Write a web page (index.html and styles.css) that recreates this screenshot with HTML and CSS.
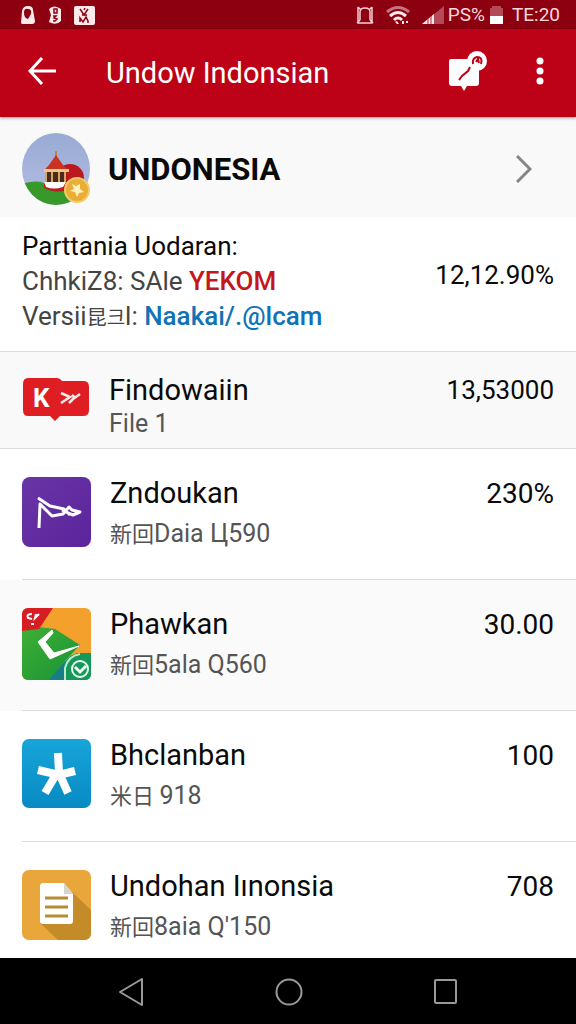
FILE: index.html
```html
<!DOCTYPE html>
<html lang="id">
<head>
  <meta charset="UTF-8">
  <meta name="viewport" content="width=device-width, initial-scale=1.0">
  <title>Undow Indonsian</title>
  <link rel="stylesheet" href="styles.css">
</head>
<body>
<div class="status-bar">
  <div class="status-left">
    <svg width="16" height="20" viewBox="0 0 16 20"><path d="M1 18 2 6Q3 1 8 1t5 4l2 11q0 3-3 3H2z" fill="#ffe9ea"/><path d="M8 4q4 0 3 5l-3 5Q4 13 4 8t4-4zM8 16l5 1" fill="#8c000f"/></svg>
    <svg width="14" height="20" viewBox="0 0 14 20"><path d="M1 4q5-5 12 0v12q-5 5-12 1l2-7z" fill="#ffe9ea"/><path d="M6 4h3v4H6zM5 11h3l-2 2 3 1-2 2H5" fill="none" stroke="#8c000f" stroke-width="1.5"/></svg>
    <svg width="21" height="20" viewBox="0 0 21 20"><rect width="21" height="19" y="1" rx="2" fill="#ffe9ea"/><path d="m6 4 4 6 4-6M10 5l1-2M8 10h5M6 17v-4l3 4 3-5 2 4v2" fill="none" stroke="#8c000f" stroke-width="1.5"/></svg>
  </div>
  <div class="status-right">
    <svg width="18" height="20" viewBox="0 0 18 20"><path d="M2 2v16h14V2M4 15V7q0-4 5-4t5 4v8M1 18l3-3M17 18l-3-3M2 2l3 3M16 2l-3 3M7 18h4" fill="none" stroke="#f7cfd3" stroke-width="1.5"/></svg>
    <svg class="wifi" width="24" height="20" viewBox="0 0 24 20"><g fill="none" stroke-width="3"><path d="M1 7q11-9 22 0" stroke="#c57580"/><path d="M4 11q8-7 16 0" stroke="#ffe9ea"/><path d="M8 15q4-4 8 0" stroke="#ffe9ea"/></g><path d="m9 17 2-1 2 3h-2zM16 16h2v3h-2zM20 16h2v2h-2z" fill="#ffe9ea"/></svg>
    <svg class="signal" width="22" height="20" viewBox="0 0 22 20"><path d="M0 19 22 1v18z" fill="#b44a58"/><path d="M0 19 12 9v10z" fill="#ffe9ea"/><path d="M6 13v6M9 11v8" stroke="#a52b3a"/></svg>
    <span>PS%</span>
    <svg class="battery" width="15" height="20" viewBox="0 0 15 20"><path d="M3 1h9v2h2v8H1V3h2z" fill="#b44a58"/><path d="M1 11h13v8H1z" fill="#fff"/></svg>
    <span>TE:20</span>
  </div>
</div>

<header class="app-bar">
  <button type="button" class="icon-btn" aria-label="Back">
    <svg width="28" height="28" viewBox="0 0 28 28"><path d="M14 1 2 14l12 13M2 14h26" fill="none" stroke="#fff" stroke-width="3"/></svg>
  </button>
  <h1>Undow Indonsian</h1>
  <button type="button" class="icon-btn" aria-label="New message">
    <svg width="40" height="40" viewBox="0 0 40 40"><path d="M3 8h21l7 8v16q0 3-3 3h-9l-3 5-3-5H4q-3 0-3-3V10q0-2 2-2z" fill="#fff"/><circle cx="29" cy="10" r="10" fill="#fff"/><path d="m11 29 3-4 6-5 2-4" fill="none" stroke="#bd0217" stroke-width="2"/><path d="M25 13q-1-6 4-7 6 0 4 7M28 11l2-3 1 4" fill="none" stroke="#bd0217" stroke-width="2"/></svg>
  </button>
  <button type="button" class="icon-btn more" aria-label="More options">
    <svg width="8" height="28" viewBox="0 0 8 28"><g fill="#fff"><circle cx="4" cy="4" r="3.5"/><circle cx="4" cy="14" r="3.5"/><circle cx="4" cy="24" r="3.5"/></g></svg>
  </button>
</header>

<main>
  <a href="#" class="profile">
    <svg width="68" height="72" viewBox="0 0 68 72">
      <defs>
        <clipPath id="avatar"><ellipse cx="34" cy="36" rx="34" ry="36"/></clipPath>
        <linearGradient id="sky" x1="0" y1="0" x2="0" y2="1"><stop offset="0" stop-color="#97abd3"/><stop offset="1" stop-color="#b6bce4"/></linearGradient>
      </defs>
      <g clip-path="url(#avatar)">
        <path fill="url(#sky)" d="M0 0h68v72H0z"/>
        <path d="M0 51q15-6 31 2t37 6v13H0z" fill="#36992a"/>
        <circle cx="48" cy="45" r="14" fill="#bd1822"/>
        <path d="M22 50h28v5q-15 7-28 0z" fill="#b91f20"/>
      </g>
      <path d="M34 18v7" stroke="#c98533" stroke-width="2"/>
      <path d="m34 22 7 10 5 5H22l5-5z" fill="#ca3224"/>
      <path d="M22 36h25v3H22z" fill="#e9c785"/>
      <path d="M24 39h20v10H24z" fill="#4b291b"/>
      <path d="M24 39v10M30 39v10M37 39v10M43 39v10" stroke="#d3a666" stroke-width="2"/>
      <path d="M22 49h22l-3 5q-9 3-17 0z" fill="#fff"/>
      <circle cx="55" cy="57" r="12" fill="#eaae38" stroke="#f3cb68" stroke-width="2"/>
      <path d="m50 51 4 2 4-2v5l4 3-5 1-2 4-2-5-5-1 4-2z" fill="#fff0bc"/>
    </svg>
    <h2>UNDONESIA</h2>
    <svg class="chevron" width="16" height="28" viewBox="0 0 16 28"><path d="m1 1 13 13L1 27" fill="none" stroke="#858585" stroke-width="3"/></svg>
  </a>

  <section class="details">
    <div class="details-text">
      <p class="lead">Parttania Uodaran:</p>
      <p>ChhkiZ8: SAle <strong>YEKOM</strong></p>
      <p>Versii<span class="cjk">昆크</span>l: <a href="#">Naakai/.@lcam</a></p>
    </div>
    <span class="value">12,12.90%</span>
  </section>

  <ul class="list">
    <li class="row compact">
      <svg width="68" height="44" viewBox="0 0 68 44"><path d="M6 0h29q3 0 5 3h22q5 0 5 6v23q0 6-6 6H38l-5 5-5-5H6q-5 0-5-6V6q0-6 5-6z" fill="#df1e23"/><text x="11" y="29" class="badge-text">K</text><path d="m39 15 9 4-9 6M47 25l4-4 7-5M50 17l3 3" fill="none" stroke="#ffe9e9" stroke-width="2.5"/></svg>
      <div class="row-text">
        <h3>Findowaiin</h3>
        <p>File 1</p>
      </div>
      <span class="value">13,53000</span>
    </li>
    <li class="row">
      <svg width="69" height="70" viewBox="0 0 69 70">
        <defs><linearGradient id="purple" x1="0" y1="0" x2="1" y2="1"><stop offset="0" stop-color="#6835a6"/><stop offset="1" stop-color="#5c249b"/></linearGradient></defs>
        <rect width="69" height="70" rx="8" fill="url(#purple)"/>
        <path d="m17 51 1-24 12 12 11-2 6-7 3 3 8 2-7 3-5-2-6-3M16 21l12 8 14 3 6 6" fill="none" stroke="#fff" stroke-width="3" stroke-linejoin="round"/>
      </svg>
      <div class="row-text">
        <h3>Zndoukan</h3>
        <p><span class="cjk">新回</span>Daia Ц590</p>
      </div>
      <span class="value">230%</span>
    </li>
    <li class="row shaded">
      <svg width="69" height="72" viewBox="0 0 69 72">
        <defs>
          <clipPath id="tile"><rect width="69" height="72" rx="6"/></clipPath>
          <linearGradient id="green" x1="0" y1="0" x2="1" y2="1"><stop offset="0" stop-color="#3faf34"/><stop offset="1" stop-color="#179336"/></linearGradient>
        </defs>
        <g clip-path="url(#tile)">
          <path fill="#f3a02c" d="M0 0h69v72H0z"/>
          <path d="M0 23l17-4 16 2 25 16-16 17-14 18H0z" fill="url(#green)"/>
          <path d="m27 72 15-18 13-9h14v27z" fill="#167e87"/>
          <path d="M0 0h31L17 21 0 23z" fill="#d71d24"/>
          <path d="M42 72V58q3-12 16-13h11v27z" fill="#16985a"/>
          <path d="M43 72V60q3-12 15-14" fill="none" stroke="#bfe9c7" stroke-width="2"/>
        </g>
        <path d="M30 22 16 34l12 17 29-13-25 7-9-11 8-9z" fill="#fff" stroke="#fff" stroke-linejoin="round"/>
        <path d="M10 6q-6 0-4 4l4 1M14 6l-1 4 4-4M9 16h3" fill="none" stroke="#fff" stroke-width="2"/>
        <circle cx="58" cy="61" r="8" fill="none" stroke="#e9fff0" stroke-width="2"/>
        <path d="m53 59 5 5 6-6" fill="none" stroke="#e9fff0" stroke-width="3"/>
      </svg>
      <div class="row-text">
        <h3>Phawkan</h3>
        <p><span class="cjk">新回</span>5ala Q560</p>
      </div>
      <span class="value">30.00</span>
    </li>
    <li class="row">
      <svg width="69" height="69" viewBox="0 0 69 69">
        <defs><linearGradient id="blue" x1="0" y1="0" x2="0" y2="1"><stop offset="0" stop-color="#18a5d9"/><stop offset="1" stop-color="#078bc2"/></linearGradient></defs>
        <rect width="69" height="69" rx="7" fill="url(#blue)"/>
        <path d="m36 14 1 20M16 31l21 5 16-4M35 34 23 54M37 34l9 20" fill="none" stroke="#fff" stroke-width="8"/>
      </svg>
      <div class="row-text">
        <h3>Bhclanban</h3>
        <p><span class="cjk">米日 </span>918</p>
      </div>
      <span class="value">100</span>
    </li>
    <li class="row">
      <svg width="69" height="70" viewBox="0 0 69 70">
        <rect width="69" height="70" rx="7" fill="#e8a63b"/>
        <path d="m50 22 19 18v23q0 7-7 7H36L18 53z" fill="#c48b29"/>
        <path d="M20 13h22l9 11v27q0 3-3 3H21q-3 0-3-3V15z" fill="#fff"/>
        <path d="M42 13v11h9z" fill="#d9d5cc"/>
        <path d="M23 28h23M23 37h23M23 46h23" stroke="#b58c35" stroke-width="3"/>
      </svg>
      <div class="row-text">
        <h3>Undohan Iınonsia</h3>
        <p><span class="cjk">新回</span>8aia Q'150</p>
      </div>
      <span class="value">708</span>
    </li>
  </ul>
</main>

<nav class="nav-bar">
  <button type="button" aria-label="Back"><svg width="26" height="28" viewBox="0 0 26 28"><path d="M24 1v26L2 14z" fill="none" stroke="#999" stroke-width="2" stroke-linejoin="round"/></svg></button>
  <button type="button" aria-label="Home"><svg width="28" height="28" viewBox="0 0 28 28"><circle cx="14" cy="14" r="12.5" fill="none" stroke="#999" stroke-width="2"/></svg></button>
  <button type="button" aria-label="Recent apps"><svg width="24" height="26" viewBox="0 0 24 26"><rect x="1" y="1" width="21" height="23" rx="1" fill="none" stroke="#999" stroke-width="2"/></svg></button>
</nav>
</body>
</html>
```
FILE: styles.css
```css
* {
  box-sizing: border-box;
}
body {
  display: flex;
  flex-direction: column;
  min-height: 100vh;
  margin: 0;
  font-family: Roboto, "Noto Sans CJK SC", sans-serif;
  background-color: #fff;
  color: #0a0a0a;
}
h1, h2, h3, p, ul {
  margin: 0;
  padding: 0;
  font-weight: 400;
}
svg {
  display: block;
  flex: none;
}
button {
  padding: 0;
  border: none;
  background: none;
  cursor: pointer;
}
a {
  color: inherit;
  text-decoration: none;
}
.status-bar {
  display: flex;
  justify-content: space-between;
  align-items: center;
  padding: 0 16px 0 20px;
  background-color: #8c000f;
  color: #f9d9dc;
  font-size: 19px;
  line-height: 29px;
}
.status-left,
.status-right {
  display: flex;
  align-items: center;
}
.status-left {
  gap: 12px;
}
.status-right {
  gap: 4px;
}
.wifi {
  margin-left: 8px;
}
.signal {
  margin-left: 8px;
}
.battery {
  margin-right: 4px;
}
.app-bar {
  position: relative;
  display: flex;
  align-items: center;
  padding: 22px 28px;
  background-color: #bd0217;
  color: #fff;
  box-shadow: 0 1px 3px rgba(0, 0, 0, 0.4);
}
.app-bar h1 {
  flex: 1;
  margin-left: 50px;
  font-size: 29px;
  line-height: 44px;
}
.icon-btn {
  margin-bottom: 4px;
}
.more {
  margin-left: 48px;
  margin-right: 4px;
}
main {
  flex: 1;
}
.profile {
  display: flex;
  align-items: center;
  padding: 16px 44px 12px 22px;
  background-color: #f9f9f9;
}
.profile h2 {
  flex: 1;
  margin-left: 18px;
  font-size: 31px;
  font-weight: 700;
}
.details {
  display: flex;
  justify-content: space-between;
  align-items: center;
  padding: 12px 22px 15px;
  border-bottom: 1px solid #dcdcdc;
  color: #444;
  font-size: 26px;
  line-height: 35px;
}
.details .lead {
  color: #0a0a0a;
}
.details strong {
  color: #c4161c;
  font-weight: 500;
}
.details a {
  color: #1173b5;
  font-weight: 500;
}
.value {
  color: #0a0a0a;
  font-size: 28px;
}
.details .value {
  margin-bottom: 14px;
  font-size: 26px;
}
.list {
  list-style: none;
}
.row {
  display: flex;
  align-items: flex-start;
  padding: 24px 22px 0 0;
  margin-left: 22px;
}
.row > svg {
  margin-top: 4px;
}
.row-text {
  flex: 1;
  margin-left: 19px;
}
.row h3 {
  font-size: 29px;
}
.row h3,
.row .value {
  line-height: 41px;
}
.row p {
  color: #555;
  font-size: 25px;
  line-height: 41px;
}
.cjk {
  font-size: 22px;
}
.details .cjk {
  font-size: 20px;
}
.row:not(:last-child) {
  padding-bottom: 24px;
  border-bottom: 1px solid #dcdcdc;
}
.row:nth-child(n+2) p {
  line-height: 40px;
}
.row.compact {
  margin-left: 0;
  padding: 22px 22px 8px;
  background-color: #f9f9f9;
}
.compact h3,
.compact p,
.compact .value {
  line-height: 33px;
}
.compact .value {
  font-size: 26px;
}
.badge-text {
  fill: #fff;
  font-size: 26px;
  font-weight: 700;
}
.shaded {
  background-color: #fafafa;
  box-shadow: -22px 0 #fafafa;
}
.nav-bar {
  display: flex;
  justify-content: space-between;
  align-items: center;
  padding: 20px 118px 18px;
  background-color: #000;
}
```
